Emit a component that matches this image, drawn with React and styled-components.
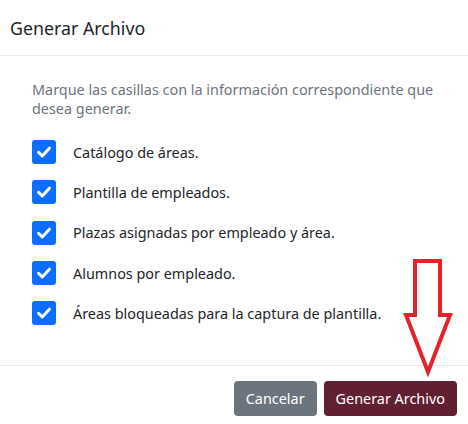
import React from "react";
import styled, { createGlobalStyle } from "styled-components";

const Global = createGlobalStyle`
  html, body { margin: 0; padding: 0; background: #fff; }
  body { font-family: "Noto Sans", "Open Sans", sans-serif; color: #212529; }
  * { box-sizing: border-box; }
`;

const Modal = styled.div`
  position: relative;
  width: 468px;
  height: 424px;
  display: flex;
  flex-direction: column;
  background: #fff;
`;

const Header = styled.div`
  height: 56px;
  padding: 0 10px;
  display: flex;
  align-items: center;
  border-bottom: 1px solid #e9ecef;
`;

const Title = styled.h5`
  margin: 0;
  font-size: 17.8px;
  font-weight: 400;
  color: #212529;
`;

const Body = styled.div`
  flex: 1;
  padding: 24px 32px 0 32px;
  display: flex;
  flex-direction: column;
`;

const Description = styled.p`
  margin: 0 0 14px 0;
  font-size: 14.4px;
  line-height: 19px;
  color: #6c757d;
`;

const Row = styled.label`
  height: 40.3px;
  display: flex;
  align-items: center;
  gap: 17px;
  font-size: 14.4px;
  color: #212529;
`;

const Box = styled.span`
  width: 24px;
  height: 24px;
  border-radius: 3px;
  background: #0d6efd;
  display: flex;
  align-items: center;
  justify-content: center;
  flex-shrink: 0;
`;

const Footer = styled.div`
  height: 59px;
  border-top: 1px solid #e9ecef;
  display: flex;
  justify-content: flex-end;
  align-items: flex-start;
  gap: 7px;
  padding: 15px 11px 0 0;
`;

const Button = styled.button`
  height: 35px;
  padding: 0 12px;
  border: none;
  border-radius: 4px;
  font-family: "Noto Sans", "Open Sans", sans-serif;
  font-size: 14.4px;
  color: #fff;
  background: ${(p) => (p.$variant === "primary" ? "#611f32" : "#6c757d")};
`;

const Arrow = styled.svg`
  position: absolute;
  left: 402px;
  top: 258px;
`;

const items = [
  "Catálogo de áreas.",
  "Plantilla de empleados.",
  "Plazas asignadas por empleado y área.",
  "Alumnos por empleado.",
  "Áreas bloqueadas para la captura de plantilla.",
];

export default function App() {
  return (
    <>
      <Global />
      <Modal>
        <Header>
          <Title>Generar Archivo</Title>
        </Header>
        <Body>
          <Description>
            Marque las casillas con la información correspondiente que desea generar.
          </Description>
          {items.map((t) => (
            <Row key={t}>
              <Box>
                <svg width="18" height="18" viewBox="0 0 18 18">
                  <path d="M3.6 9.4 L7.3 13 L14.4 5.2" fill="none" stroke="#fff" strokeWidth="3" strokeLinecap="round" strokeLinejoin="round" />
                </svg>
              </Box>
              {t}
            </Row>
          ))}
        </Body>
        <Footer>
          <Button>Cancelar</Button>
          <Button $variant="primary">Generar Archivo</Button>
        </Footer>
        <Arrow width="52" height="120" viewBox="0 0 52 120">
          <path d="M13 3 L38 3 L38 57 L48 57 L26 114 L4 57 L13 57 Z" fill="none" stroke="#e5222a" strokeWidth="4" strokeLinejoin="miter" />
        </Arrow>
      </Modal>
    </>
  );
}
